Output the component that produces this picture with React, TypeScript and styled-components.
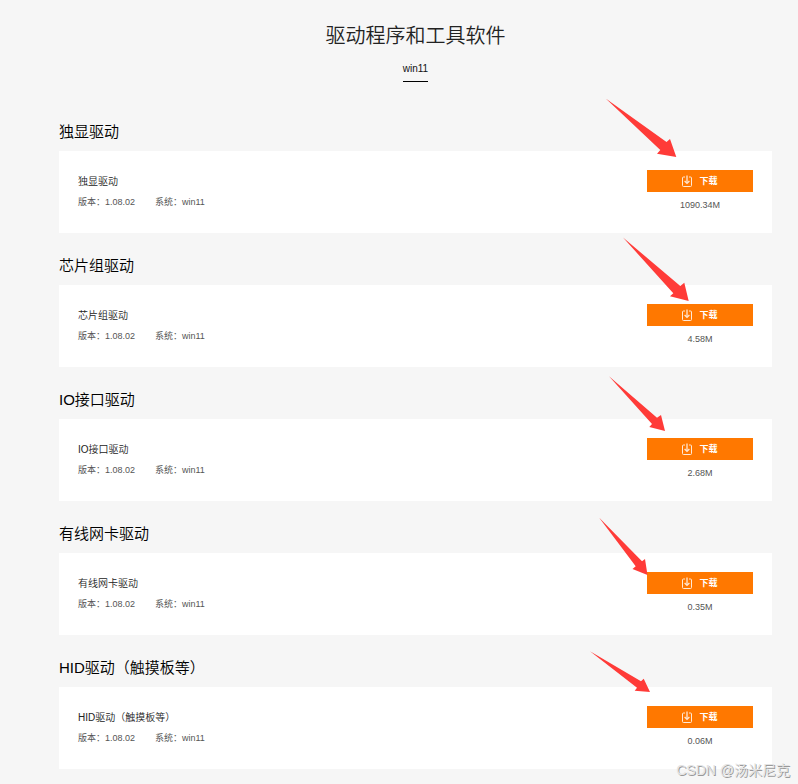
import React from 'react';
import styled, { createGlobalStyle } from 'styled-components';

const GlobalStyle = createGlobalStyle`
  * { box-sizing: border-box; }
  body {
    margin: 0;
    background: #f6f6f6;
    color: #111;
    font-family: "Liberation Sans", "Noto Sans CJK SC", sans-serif;
  }
`;

const Page = styled.main`
  position: relative;
  padding: 20px 26px 15px 59px;
`;

const Header = styled.header`
  display: flex;
  flex-direction: column;
  align-items: center;
  padding-bottom: 17px;
`;

const PageTitle = styled.h1`
  margin: 0 0 10px;
  font-size: 20px;
  line-height: 32px;
  font-weight: 350;
  color: #222;
`;

const Tab = styled.button`
  height: 20px;
  padding: 0 0 6px;
  border: 0;
  border-bottom: 1px solid #000;
  background: none;
  font-family: inherit;
  font-size: 10px;
  line-height: 12px;
  color: #111;
  cursor: pointer;
`;

const Section = styled.section`
  position: relative;
`;

const SectionTitle = styled.h2`
  margin: 0;
  padding: 21px 0 7px;
  font-size: 15px;
  line-height: 24px;
  font-weight: 350;
  color: #000;
`;

const Card = styled.article`
  display: flex;
  justify-content: space-between;
  padding: 19px 19px 16px;
  background: #fff;
`;

const DriverName = styled.h3`
  margin: 0;
  font-size: 10px;
  line-height: 24px;
  font-weight: 350;
  color: #222;
`;

const Meta = styled.div`
  display: flex;
  gap: 20px;
  font-size: 9px;
  line-height: 16px;
  color: #555;
`;

const Action = styled.div`
  width: 106px;
  text-align: center;
`;

const DownloadButton = styled.button`
  display: flex;
  align-items: center;
  justify-content: center;
  gap: 7px;
  width: 100%;
  height: 22px;
  padding: 0;
  border: 0;
  background: #ff7800;
  color: #fff;
  font-family: inherit;
  font-size: 9px;
  font-weight: 700;
  line-height: 22px;
  cursor: pointer;
`;

const FileSize = styled.div`
  padding-top: 1px;
  font-size: 9px;
  line-height: 24px;
  color: #555;
`;

const ArrowMark = styled.svg`
  position: absolute;
  top: 0;
  right: 0;
  pointer-events: none;
`;

const Watermark = styled.div`
  position: absolute;
  right: 8px;
  bottom: 4px;
  font-size: 14px;
  line-height: 20px;
  font-weight: 350;
  color: #e4e4e4;
  text-shadow: 1px 1px 0 #999;
  pointer-events: none;
`;

interface Driver {
  name: string;
  size: string;
  arrow: string;
}

const drivers: Driver[] = [
  { name: '独显驱动', size: '1090.34M', arrow: '33.7,-.5 94.5,43 98,40 104.3,58 85,54.7 88.3,51' },
  { name: '芯片组驱动', size: '4.58M', arrow: '51,4.5 108.3,53 112.3,49.7 116.7,68 98,63.3 101.3,60.3' },
  { name: 'IO接口驱动', size: '2.68M', arrow: '37,9.2 85,50.7 89,48 93,64 77.3,60 80,57' },
  { name: '有线网卡驱动', size: '0.35M', arrow: '27,16.5 70,60.3 73,58 75.5,73.9 60.5,68 63.7,65.3' },
  { name: 'HID驱动（触摸板等）', size: '0.06M', arrow: '18,16.2 69,46.3 71.7,43.7 78,57 62.7,55.7 65,52.7' },
];

const DownloadIcon = () => (
  <svg width="10" height="12" viewBox="0 0 10 12" fill="none" stroke="#ffe9d6" aria-hidden="true">
    <path d="M3 2H1.5a1 1 0 0 0-1 1v7.5a1 1 0 0 0 1 1h7a1 1 0 0 0 1-1V3a1 1 0 0 0-1-1H7" />
    <path d="M5 .5V8" strokeWidth="1.3" />
    <path d="M2.6 6 5 8.4 7.4 6" strokeWidth="1.3" />
  </svg>
);

function DriverSection({ name, size, arrow }: Driver) {
  return (
    <Section>
      <SectionTitle>{name}</SectionTitle>
      <Card>
        <div>
          <DriverName>{name}</DriverName>
          <Meta>
            <span>版本：1.08.02</span>
            <span>系统：win11</span>
          </Meta>
        </div>
        <Action>
          <DownloadButton type="button">
            <DownloadIcon />
            下载
          </DownloadButton>
          <FileSize>{size}</FileSize>
        </Action>
      </Card>
      <ArrowMark width="200" height="134" viewBox="0 0 200 134" overflow="visible" aria-hidden="true">
        <polygon points={arrow} fill="#ff3b38" />
      </ArrowMark>
    </Section>
  );
}

export default function App() {
  return (
    <Page lang="zh-CN">
      <GlobalStyle />
      <Header>
        <PageTitle>驱动程序和工具软件</PageTitle>
        <Tab type="button">win11</Tab>
      </Header>
      {drivers.map((driver) => (
        <DriverSection key={driver.name} {...driver} />
      ))}
      <Watermark>CSDN @汤米尼克</Watermark>
    </Page>
  );
}
